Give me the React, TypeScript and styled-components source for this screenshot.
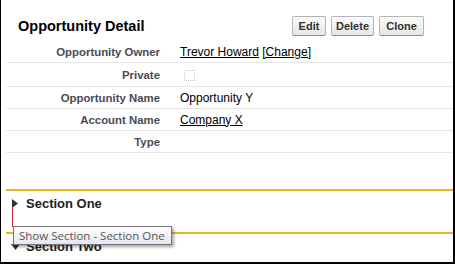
import React from 'react';
import styled, { createGlobalStyle } from 'styled-components';

const GlobalStyle = createGlobalStyle`
    html, body {
        margin: 0;
        padding: 0;
        background: #fff;
    }
    body {
        font-family: Arial, "Liberation Sans", sans-serif;
    }
`;

const Frame = styled.div`
    position: relative;
    width: 455px;
    height: 264px;
    box-sizing: border-box;
    border-left: 1px solid #000;
    border-right: 2px solid #000;
    border-bottom: 2px solid #000;
    padding-left: 5px;
    background: #fff;
    overflow: hidden;
`;

const Header = styled.div`
    display: flex;
    align-items: flex-start;
    height: 41px;
    box-sizing: border-box;
    padding: 16px 0 0 12px;
`;

const Title = styled.h2`
    width: 274px;
    margin: 0;
    font-size: 14.5px;
    line-height: 20px;
    font-weight: bold;
    color: #000;
`;

const ButtonGroup = styled.div`
    display: flex;
    gap: 5px;
`;

const Button = styled.button<{ $w: number }>`
    width: ${(p) => p.$w}px;
    height: 20px;
    box-sizing: border-box;
    padding: 0;
    border: 1px solid #b5b5b5;
    border-bottom-color: #8a8a8a;
    border-radius: 2px;
    background: linear-gradient(#fbfbfb, #e6e6e6);
    font-family: Arial, "Liberation Sans", sans-serif;
    font-size: 11px;
    font-weight: bold;
    color: #333;
`;

const Row = styled.div<{ $h?: number }>`
    display: grid;
    grid-template-columns: 164px 1fr;
    align-items: center;
    height: ${(p) => p.$h ?? 21}px;
    border-bottom: 1px solid #e6e6e6;
`;

const Label = styled.div`
    text-align: right;
    padding-right: 10px;
    font-size: 11.4px;
    font-weight: bold;
    color: #4a4a56;
`;

const Value = styled.div`
    padding-left: 10px;
    font-size: 12px;
    color: #000;
`;

const Link = styled.a`
    color: #000;
    text-decoration: underline;
`;

const Checkbox = styled.span`
    display: block;
    width: 11px;
    height: 11px;
    margin: 2px 0 0 4px;
    box-sizing: border-box;
    border: 1px dotted #c4c4c4;
`;

const Section = styled.div<{ $first?: boolean }>`
    margin-top: ${(p) => (p.$first ? 36 : 0)}px;
    height: 41px;
    border-top: 2px solid #e1b82a;
`;

const SectionHeader = styled.div`
    display: flex;
    align-items: center;
    gap: 6px;
    padding: 4px 0 0 5px;
    height: 16px;
    font-size: 13px;
    font-weight: bold;
    color: #222;
`;

const Toggle = styled.svg`
    width: 9px;
    height: 9px;
    flex: 0 0 auto;
`;

const Cursor = styled.div`
    position: absolute;
    left: 11px;
    top: 207px;
    width: 1px;
    height: 20px;
    background: #c8262b;
`;

const Tooltip = styled.div`
    position: absolute;
    left: 12px;
    top: 226px;
    width: 159px;
    height: 19px;
    box-sizing: border-box;
    padding-left: 5px;
    border: 1px solid #767676;
    background: linear-gradient(#ffffff, #e4e5f0);
    box-shadow: 2px 2px 3px rgba(0, 0, 0, 0.35);
    font-family: "Open Sans", "Noto Sans", sans-serif;
    font-size: 11.5px;
    line-height: 17px;
    color: #575757;
    white-space: nowrap;
`;

const fields = [
    { label: 'Opportunity Owner', h: 21 },
    { label: 'Private', h: 23 },
    { label: 'Opportunity Name', h: 21 },
    { label: 'Account Name', h: 21 },
    { label: 'Type', h: 21 },
];

const App: React.FC = () => {
    const values: React.ReactNode[] = [
        <>
            <Link>Trevor Howard</Link> <Link>[Change]</Link>
        </>,
        <Checkbox />,
        'Opportunity Y',
        <Link>Company X</Link>,
        null,
    ];

    return (
        <>
            <GlobalStyle />
            <Frame>
                <Header>
                    <Title>Opportunity Detail</Title>
                    <ButtonGroup>
                        <Button $w={34}>Edit</Button>
                        <Button $w={43}>Delete</Button>
                        <Button $w={45}>Clone</Button>
                    </ButtonGroup>
                </Header>
                {fields.map((f, i) => (
                    <Row key={f.label} $h={f.h}>
                        <Label>{f.label}</Label>
                        <Value>{values[i]}</Value>
                    </Row>
                ))}
                <Section $first>
                    <SectionHeader>
                        <Toggle viewBox="0 0 9 9">
                            <polygon points="1,0 7,4.5 1,9" fill="#333" />
                        </Toggle>
                        Section One
                    </SectionHeader>
                </Section>
                <Section>
                    <SectionHeader>
                        <Toggle viewBox="0 0 9 9">
                            <polygon points="0,2 9,2 4.5,8" fill="#333" />
                        </Toggle>
                        Section Two
                    </SectionHeader>
                </Section>
                <Cursor />
                <Tooltip>Show Section - Section One</Tooltip>
            </Frame>
        </>
    );
};

export default App;
